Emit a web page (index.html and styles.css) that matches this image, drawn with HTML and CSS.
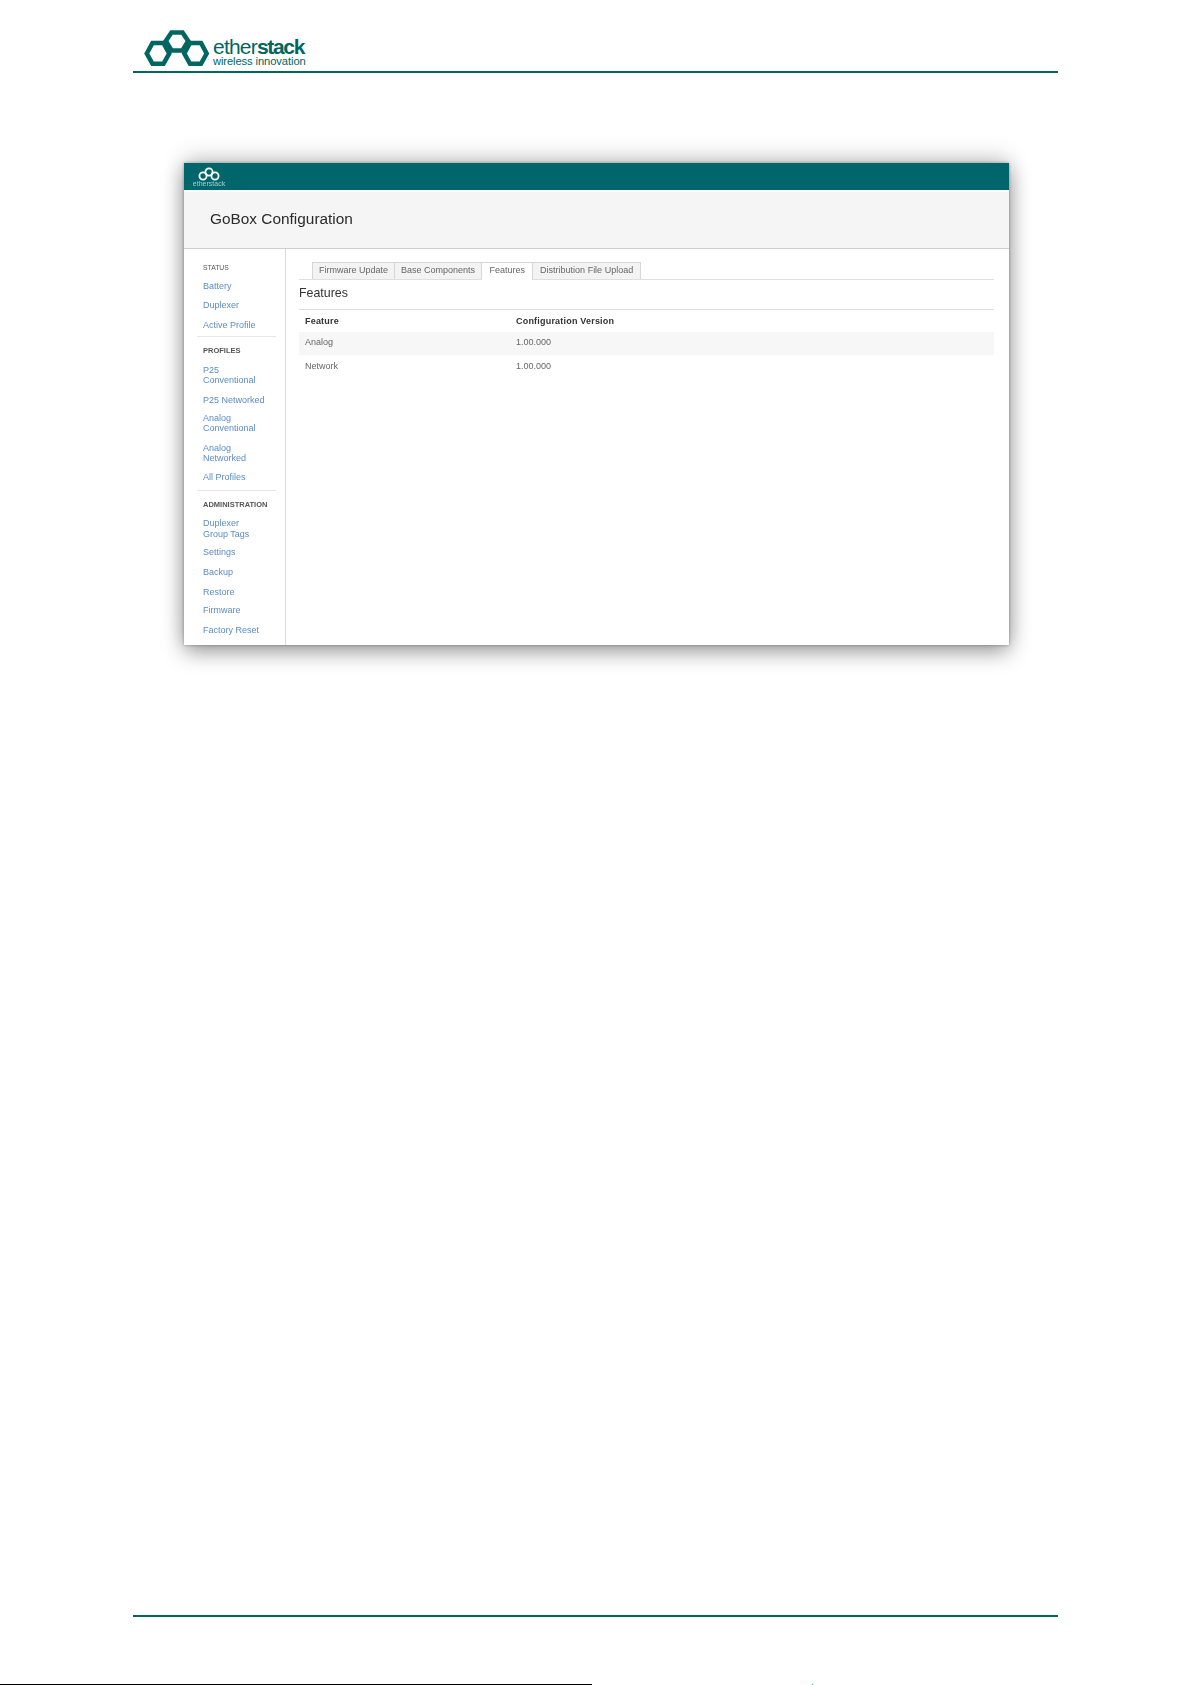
FILE: index.html
```html
<!DOCTYPE html>
<html lang="en">
<head>
<meta charset="utf-8">
<title>GoBox Configuration</title>
<link rel="stylesheet" href="styles.css">
</head>
<body>
<div class="page">
  <header class="doc-header">
    <svg class="logo-mark" width="65" height="37" viewBox="0 0 65 37" aria-hidden="true">
      <g fill="none" stroke="#00665f" stroke-width="4.6">
        <polygon points="2.8,23.5 8.5,13 19.5,13 25.2,23.5 19.5,33.8 8.5,33.8"/>
        <polygon points="21.8,11 27.5,2.5 38.5,2.5 44.2,11 38.5,20.5 27.5,20.5"/>
        <polygon points="40.3,23.5 46,13 57,13 62.7,23.5 57,33.8 46,33.8"/>
      </g>
    </svg>
    <div class="logo-text">
      <div class="logo-name">ether<b>stack</b></div>
      <div class="logo-tag">wireless innovation</div>
    </div>
  </header>
  <div class="rule"></div>

  <section class="window">
    <div class="topbar">
      <div class="mini-logo">
        <svg width="22" height="14" viewBox="0 0 22 14" aria-hidden="true">
          <g fill="none" stroke="#ffffff" stroke-width="1.8">
            <circle cx="5" cy="9" r="3.6"/>
            <circle cx="11" cy="5" r="3.6"/>
            <circle cx="17" cy="9" r="3.6"/>
          </g>
        </svg>
        <span>etherstack</span>
      </div>
    </div>
    <div class="title-band"><h1>GoBox Configuration</h1></div>
    <div class="body-row">
      <nav class="sidebar">
        <div class="nav-head nav-head-first">STATUS</div>
        <a class="nav-link">Battery</a>
        <a class="nav-link">Duplexer</a>
        <a class="nav-link">Active Profile</a>
        <div class="nav-divider"></div>
        <div class="nav-head">PROFILES</div>
        <a class="nav-link">P25<br>Conventional</a>
        <a class="nav-link">P25 Networked</a>
        <a class="nav-link tight">Analog<br>Conventional</a>
        <a class="nav-link">Analog<br>Networked</a>
        <a class="nav-link snug">All Profiles</a>
        <div class="nav-divider nav-divider-low"></div>
        <div class="nav-head">ADMINISTRATION</div>
        <a class="nav-link">Duplexer<br>Group Tags</a>
        <a class="nav-link tight">Settings</a>
        <a class="nav-link loose">Backup</a>
        <a class="nav-link">Restore</a>
        <a class="nav-link tight">Firmware</a>
        <a class="nav-link loose">Factory Reset</a>
      </nav>
      <main class="content">
        <div class="tabs">
          <span class="tab">Firmware Update</span>
          <span class="tab">Base Components</span>
          <span class="tab tab-active">Features</span>
          <span class="tab tab-wide">Distribution File Upload</span>
        </div>
        <h2>Features</h2>
        <table class="grid">
          <thead>
            <tr><th class="col-a">Feature</th><th>Configuration Version</th></tr>
          </thead>
          <tbody>
            <tr class="odd"><td>Analog</td><td>1.00.000</td></tr>
            <tr><td>Network</td><td>1.00.000</td></tr>
          </tbody>
        </table>
      </main>
    </div>
  </section>

  <div class="spacer"></div>
  <div class="rule"></div>
  <div class="doc-bottom">
    <div class="footnote-rule"></div>
    <div class="speck"></div>
  </div>
</div>
</body>
</html>
```
FILE: styles.css
```css
* { box-sizing: border-box; }
html, body { margin: 0; padding: 0; background: #fff; }
body { font-family: "Liberation Sans", Arial, sans-serif; }

.page {
  height: 1685px;
  display: flex;
  flex-direction: column;
  overflow: hidden;
}

.doc-header {
  height: 71px;
  margin: 0 133px;
  padding: 30px 0 0 11px;
  display: flex;
  gap: 4px;
  align-items: flex-start;
  overflow: hidden;
}
.logo-text { color: #00665f; padding-top: 7px; }
.logo-name {
  font-size: 21px;
  line-height: 20px;
  letter-spacing: -.8px;
  word-spacing: 0;
}
.logo-name b { font-weight: 700; letter-spacing: -1.3px; }
.logo-tag {
  font-size: 11.2px;
  line-height: 11px;
  margin-top: -1px;
  white-space: nowrap;
  letter-spacing: -0.1px;
}

.rule {
  height: 2px;
  margin: 0 133px;
  flex: none;
  background: #00665f;
}

.window {
  flex: none;
  width: 825px;
  height: 482px;
  margin: 90px 0 0 184px;
  background: #fff;
  display: flex;
  flex-direction: column;
  box-shadow: 0 7px 20px rgba(0,0,0,.38), 0 -6px 22px rgba(0,0,0,.16), 0 0 3px rgba(0,0,0,.32);
  filter: blur(.55px);
}

.topbar {
  height: 27px;
  flex: none;
  background: #00666b;
  padding: 4px 0 0 8px;
}
.mini-logo {
  width: 34px;
  display: flex;
  flex-direction: column;
  align-items: center;
  color: #a9cfcf;
  font-size: 7px;
  line-height: 6px;
  white-space: nowrap;
}
.mini-logo svg { display: block; }

.title-band {
  height: 57px;
  flex: none;
  margin-top: 2px;
  background: #f5f5f5;
  border-bottom: 1px solid #cfcfcf;
  padding: 18px 0 0 26px;
}
h1 {
  margin: 0;
  font-size: 15.4px;
  line-height: 18px;
  font-weight: 400;
  color: #2b2b2b;
}

.body-row { flex: 1; display: flex; min-height: 0; }

.sidebar {
  width: 102px;
  flex: none;
  border-right: 1px solid #dcdcdc;
  padding: 14px 11px 0 19px;
  display: flex;
  flex-direction: column;
}
.nav-head {
  font-size: 7.5px;
  font-weight: 700;
  line-height: 10px;
  color: #555;
  margin: 9px 0 4px;
  white-space: nowrap;
}
.nav-head-first {
  font-size: 6.8px;
  font-weight: 400;
  margin: 0 0 3px;
}
.nav-link {
  display: block;
  font-size: 9px;
  line-height: 10.5px;
  padding: 4.5px 0;
  color: #5b8cc4;
  white-space: nowrap;
}
.tight { margin-top: -1.5px; }
.snug { margin-top: -.5px; }
.loose { margin-top: 1px; }
.nav-divider {
  height: 1px;
  background: #e6e6e6;
  margin: 1.5px -2px 0 -6px;
  flex: none;
}
.nav-divider-low { margin-top: 2.5px; }

.content {
  flex: 1;
  min-width: 0;
  padding: 13px 15px 0 13px;
}
.tabs {
  display: flex;
  height: 18px;
  padding-left: 13px;
  border-bottom: 1px solid #dfdfdf;
}
.tab {
  height: 17px;
  padding: 0 6px;
  font-size: 9px;
  line-height: 15px;
  color: #666;
  background: #f3f3f3;
  border: 1px solid #d6d6d6;
  border-bottom: 0;
  white-space: nowrap;
}
.tab + .tab { border-left: 0; }
.tab-active { height: 18px; background: #fff; padding: 0 7px 0 7.5px; }
.tab-wide { padding: 0 7px; }

h2 {
  margin: 6px 0 0;
  font-size: 12.4px;
  line-height: 15px;
  font-weight: 400;
  color: #333;
  padding-bottom: 8px;
  border-bottom: 1px solid #dfdfdf;
}

.grid {
  width: 100%;
  border-collapse: collapse;
  font-size: 9px;
  color: #666;
}
.grid th, .grid td {
  text-align: left;
  padding: 0 0 0 6px;
  line-height: 11px;
}
.grid th {
  font-weight: 700;
  color: #333;
  height: 22px;
  letter-spacing: .2px;
}
.col-a { width: 211px; }
.grid td { height: 23px; }
.grid .odd td { background: #f7f7f7; padding-bottom: 2px; }

.spacer { flex: 1; }

.doc-bottom {
  flex: none;
  height: 68px;
  position: relative;
}
.footnote-rule {
  position: absolute;
  left: 0;
  bottom: 0;
  width: 592px;
  height: 1px;
  background: #000;
}
.speck {
  position: absolute;
  left: 812px;
  bottom: 0;
  width: 1px;
  height: 1px;
  background: #19b5c4;
}
```
